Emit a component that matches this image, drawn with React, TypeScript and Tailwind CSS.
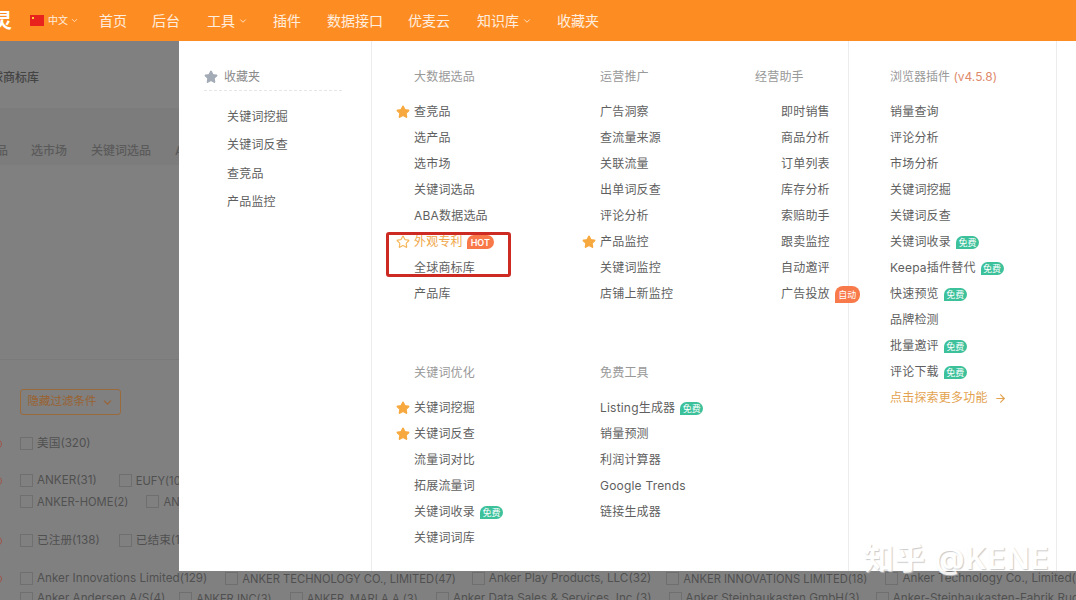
import React from 'react';
import { ArrowRight, ChevronDown, Star } from 'lucide-react';

const font = { fontFamily: '"Inter", "Noto Sans CJK SC", sans-serif' };

type Item = {
  label: string;
  star?: boolean;
  free?: boolean;
  hot?: boolean;
  auto?: boolean;
};

const Row = ({ label, star, free, hot, auto, slot }: Item & { slot: string }) => (
  <li className={`flex h-[26px] items-center whitespace-nowrap ${hot ? 'text-[#f0a64a]' : ''}`}>
    <span className={slot}>
      {star && <Star className="h-[14px] w-[14px] fill-[#f7a83e] text-[#f7a83e]" />}
      {hot && <Star className="h-[14px] w-[14px] text-[#f7b65a]" />}
    </span>
    <span>{label}</span>
    {free && (
      <span className="ml-[5px] flex h-[13px] w-[23px] shrink-0 items-center justify-center rounded-[7px] rounded-bl-none bg-[#3cc19b] text-[9px] leading-none tracking-normal text-white">
        免费
      </span>
    )}
    {hot && (
      <span className="ml-[4px] flex h-[14px] w-[27px] shrink-0 items-center justify-center rounded-[7px] rounded-bl-none bg-[#f9784a] text-[9px] font-semibold leading-none tracking-normal text-white">
        HOT
      </span>
    )}
    {auto && (
      <span className="ml-[5px] flex h-[17px] w-[25px] shrink-0 items-center justify-center rounded-[8px] rounded-bl-none bg-[#f8794a] text-[9px] leading-none tracking-normal text-white">
        自动
      </span>
    )}
  </li>
);

const Section = ({ title, items, slot, className }: { title: string; items: Item[]; slot: string; className: string }) => (
  <div className={className}>
    <h4 className="mb-[12px] h-[21px] text-[12px] leading-[21px] tracking-[0.2px] text-[#999]">{title}</h4>
    <ul className="-ml-[18px] text-[12px] tracking-[0.2px] text-[#5f5f5f]">
      {items.map((item) => (
        <Row key={item.label} slot={slot} {...item} />
      ))}
    </ul>
  </div>
);

const Check = ({ label, gap = 18, caps }: { label: string; gap?: number; caps?: boolean }) => (
  <span className="flex shrink-0 items-center" style={{ marginRight: gap }}>
    <span className="mr-[4px] h-[13px] w-[13px] shrink-0 border border-[#6f6f6f]" />
    <span className={caps ? 'text-[11.2px]' : 'text-[11.7px]'}>{label}</span>
  </span>
);

// red required dot, cut off by the left edge of the page
const Dot = () => (
  <span className="-ml-[28px] mr-[18px] h-[10px] w-[10px] shrink-0 rounded-full border border-[#a0544a]" />
);

const plugin: Item[] = [
  { label: '销量查询' },
  { label: '评论分析' },
  { label: '市场分析' },
  { label: '关键词挖掘' },
  { label: '关键词反查' },
  { label: '关键词收录', free: true },
  { label: 'Keepa插件替代', free: true },
  { label: '快速预览', free: true },
  { label: '品牌检测' },
  { label: '批量邀评', free: true },
  { label: '评论下载', free: true },
];

export default function App() {
  return (
    <div style={font} className="relative h-[600px] w-[1076px] overflow-hidden bg-[#808080]">
      {/* top nav */}
      <header className="flex h-[41px] items-center whitespace-nowrap bg-[#fd8d22] text-[14px] text-white/85">
        <span className="-ml-[8px] w-[38px] text-[20px] font-bold text-white">灵</span>
        <span className="relative h-[11px] w-[14px] bg-[#e8221c]">
          <span className="absolute left-[2px] top-[2px] h-[2px] w-[2px] bg-[#ffd23c]" />
        </span>
        <span className="ml-[4px] text-[10px]">中文</span>
        <ChevronDown className="ml-[2px] h-[9px] w-[9px]" />
        <nav className="ml-[20px] flex items-center">
          <span className="mr-[25px]">首页</span>
          <span className="mr-[27px]">后台</span>
          <span>工具</span>
          <ChevronDown className="ml-[3px] mr-[25px] h-[10px] w-[10px]" />
          <span className="mr-[26px]">插件</span>
          <span className="mr-[25px]">数据接口</span>
          <span className="mr-[27px]">优麦云</span>
          <span>知识库</span>
          <ChevronDown className="ml-[3px] mr-[25px] h-[10px] w-[10px]" />
          <span>收藏夹</span>
        </nav>
      </header>

      {/* dimmed page behind the dropdown */}
      <main className="whitespace-nowrap text-[12px] text-[#505050]">
        <div className="flex h-[67px] items-center pt-[6px]">
          <span className="-ml-[9px] font-medium text-[#444]">球商标库</span>
        </div>
        <div className="flex h-[57px] items-start bg-[#7c7c7c] pt-[34px] font-medium text-[#5a5a5a]">
          <span className="-ml-[4px]">品</span>
          <span className="ml-[23px]">选市场</span>
          <span className="ml-[24px]">关键词选品</span>
          <span className="ml-[24px]">ABA</span>
        </div>
        <div className="h-[195px] border-b border-[#7a7a7a]" />
        <div className="pl-[20px] pt-[29px]">
          <button className="flex h-[26px] w-[101px] items-center justify-center gap-[4px] rounded-[3px] border border-[#9a6a3c] text-[11.5px] text-[#9a6231]">
            隐藏过滤条件
            <ChevronDown className="h-[13px] w-[13px]" />
          </button>
          <div className="mt-[18px] flex h-[21px] items-center">
            <Dot />
            <Check label="美国(320)" />
          </div>
          <div className="mt-[17px] flex h-[20px] items-center">
            <Dot />
            <Check label="ANKER(31)" gap={22} />
            <Check label="EUFY(10)" caps />
          </div>
          <div className="mt-[1px] flex h-[20px] items-center">
            <Check label="ANKER-HOME(2)" caps />
            <Check label="ANKER" caps />
          </div>
          <div className="mt-[19px] flex h-[20px] items-center">
            <Dot />
            <Check label="已注册(138)" gap={19} />
            <Check label="已结束(1)" />
          </div>
          <div className="mt-[18px] flex h-[20px] items-center">
            <Dot />
            <Check label="Anker Innovations Limited(129)" />
            <Check label="ANKER TECHNOLOGY CO., LIMITED(47)" caps gap={16} />
            <Check label="Anker Play Products, LLC(32)" gap={15} />
            <Check label="ANKER INNOVATIONS LIMITED(18)" caps />
            <Check label="Anker Technology Co., Limited(5)" />
          </div>
          <div className="flex h-[20px] items-center">
            <Check label="Anker Andersen A/S(4)" gap={14} />
            <Check label="ANKER INC(3)" caps />
            <Check label="ANKER_MARLA A (3)" caps />
            <Check label="Anker Data Sales & Services, Inc (3)" gap={17} />
            <Check label="Anker Steinhaukasten GmbH(3)" gap={16} />
            <Check label="Anker-Steinhaukasten-Fabrik Rug" />
          </div>
        </div>
      </main>

      {/* tools dropdown */}
      <div className="absolute left-[179px] top-[41px] flex h-[530px] w-[897px] bg-white">
        <aside className="w-[193px] shrink-0 border-r border-[#ececec] pl-[25px] pt-[25px]">
          <div className="flex h-[25px] w-[138px] items-center border-b border-dashed border-[#e6e6e6] pb-[4px] pt-[1px] text-[12px] text-[#8a8a8a]">
            <Star className="mr-[6px] h-[14px] w-[14px] fill-[#a3abb6] text-[#a3abb6]" />
            收藏夹
          </div>
          <ul className="mt-[11.5px] pl-[23px] text-[12px] tracking-[0.2px] text-[#5f5f5f]">
            {['关键词挖掘', '关键词反查', '查竞品', '产品监控'].map((t) => (
              <li key={t} className="flex h-[28.5px] items-center">{t}</li>
            ))}
          </ul>
        </aside>

        <section className="w-[477px] shrink-0 border-r border-[#ececec] pt-[25px]">
          <div className="flex h-[296px] pl-[42px]">
            <Section
              title="大数据选品"
              slot="flex w-[18px] shrink-0"
              className="w-[186px] shrink-0"
              items={[
                { label: '查竞品', star: true },
                { label: '选产品' },
                { label: '选市场' },
                { label: '关键词选品' },
                { label: 'ABA数据选品' },
                { label: '外观专利', hot: true },
                { label: '全球商标库' },
                { label: '产品库' },
              ]}
            />
            <Section
              title="运营推广"
              slot="flex w-[18px] shrink-0"
              className="w-[155px] shrink-0"
              items={[
                { label: '广告洞察' },
                { label: '查流量来源' },
                { label: '关联流量' },
                { label: '出单词反查' },
                { label: '评论分析' },
                { label: '产品监控', star: true },
                { label: '关键词监控' },
                { label: '店铺上新监控' },
              ]}
            />
            <Section
              title="经营助手"
              slot="flex w-[44px] shrink-0"
              className="w-[92px] shrink-0"
              items={[
                { label: '即时销售' },
                { label: '商品分析' },
                { label: '订单列表' },
                { label: '库存分析' },
                { label: '索赔助手' },
                { label: '跟卖监控' },
                { label: '自动邀评' },
                { label: '广告投放', auto: true },
              ]}
            />
          </div>
          <div className="flex pl-[42px]">
            <Section
              title="关键词优化"
              slot="flex w-[18px] shrink-0"
              className="w-[186px] shrink-0"
              items={[
                { label: '关键词挖掘', star: true },
                { label: '关键词反查', star: true },
                { label: '流量词对比' },
                { label: '拓展流量词' },
                { label: '关键词收录', free: true },
                { label: '关键词词库' },
              ]}
            />
            <Section
              title="免费工具"
              slot="flex w-[18px] shrink-0"
              className="w-[155px] shrink-0"
              items={[
                { label: 'Listing生成器', free: true },
                { label: '销量预测' },
                { label: '利润计算器' },
                { label: 'Google Trends' },
                { label: '链接生成器' },
              ]}
            />
          </div>
        </section>

        <section className="w-[208px] shrink-0 border-r border-[#ececec] pl-[41px] pt-[25px]">
          <h4 className="mb-[12px] h-[21px] text-[12px] leading-[21px] text-[#999]">
            浏览器插件 <span className="text-[#e08a6c]">(v4.5.8)</span>
          </h4>
          <ul className="text-[12px] tracking-[0.2px] text-[#5f5f5f]">
            {plugin.map((item) => (
              <Row key={item.label} slot="" {...item} />
            ))}
            <li className="flex h-[26px] items-center text-[#e3a24f]">
              点击探索更多功能
              <ArrowRight className="ml-[6px] h-[13px] w-[13px]" />
            </li>
          </ul>
        </section>
      </div>

      {/* red annotation drawn over the screenshot */}
      <div className="absolute left-[386px] top-[232px] h-[45px] w-[125px] rounded-[3px] border-[3px] border-[#cc2a22]" />

      {/* watermark */}
      <span className="absolute left-[864px] top-[536px] whitespace-nowrap text-[30px] font-semibold tracking-[1px] text-white opacity-90 [text-shadow:1px_1px_1px_#c4c4c4]">
        知乎 @KENE
      </span>
    </div>
  );
}
